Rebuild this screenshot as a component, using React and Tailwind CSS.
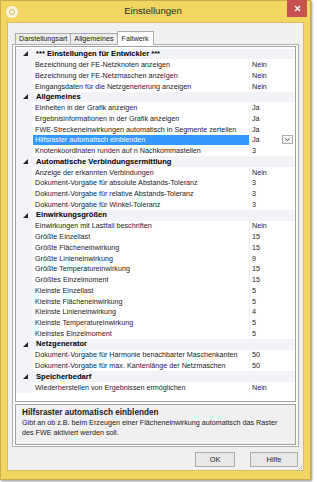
import React from "react";

const rows = [
  { cat: "*** Einstellungen für Entwickler ***" },
  { name: "Bezeichnung der FE-Netzknoten anzeigen", value: "Nein" },
  { name: "Bezeichnung der FE-Netzmaschen anzeigen", value: "Nein" },
  { name: "Eingangsdaten für die Netzgenerierung anzeigen", value: "Nein" },
  { cat: "Allgemeines" },
  { name: "Einheiten in der Grafik anzeigen", value: "Ja" },
  { name: "Ergebnisinformationen in der Grafik anzeigen", value: "Ja" },
  { name: "FWE-Streckeneinwirkungen automatisch in Segmente zerteilen", value: "Ja" },
  { name: "Hilfsraster automatisch einblenden", value: "Ja", selected: true },
  { name: "Knotenkoordinaten runden auf n Nachkommastellen", value: "3" },
  { cat: "Automatische Verbindungsermittlung" },
  { name: "Anzeige der erkannten Verbindungen", value: "Nein" },
  { name: "Dokument-Vorgabe für absolute Abstands-Toleranz", value: "3" },
  { name: "Dokument-Vorgabe für relative Abstands-Toleranz", value: "3" },
  { name: "Dokument-Vorgabe für Winkel-Toleranz", value: "3" },
  { cat: "Einwirkungsgrößen" },
  { name: "Einwirkungen mit Lastfall beschriften", value: "Nein" },
  { name: "Größte Einzellast", value: "15" },
  { name: "Größte Flächeneinwirkung", value: "15" },
  { name: "Größte Linieneinwirkung", value: "9" },
  { name: "Größte Temperatureinwirkung", value: "15" },
  { name: "Größtes Einzelmoment", value: "15" },
  { name: "Kleinste Einzellast", value: "5" },
  { name: "Kleinste Flächeneinwirkung", value: "5" },
  { name: "Kleinste Linieneinwirkung", value: "4" },
  { name: "Kleinste Temperatureinwirkung", value: "5" },
  { name: "Kleinstes Einzelmoment", value: "5" },
  { cat: "Netzgenerator" },
  { name: "Dokument-Vorgabe für Harmonie benachbarter Maschenkanten", value: "50" },
  { name: "Dokument-Vorgabe für max. Kantenlänge der Netzmaschen", value: "50" },
  { cat: "Speicherbedarf" },
  { name: "Wiederherstellen von Ergebnissen ermöglichen", value: "Nein" },
];

const Expander = () => (
  <svg width="5" height="5" viewBox="0 0 5 5" className="block">
    <polygon points="5,0 5,5 0,5" fill="#262626" />
  </svg>
);

const GridRow = ({ row }) => {
  if (row.cat) {
    return (
      <div className="flex h-[10.75px] items-center bg-[#f1f3f6]">
        <div className="w-[16px] flex justify-center pl-[2px]">
          <Expander />
        </div>
        <span className="pl-[4px] font-bold text-[7.6px] leading-none text-black whitespace-nowrap">
          {row.cat}
        </span>
      </div>
    );
  }
  return (
    <div className="flex h-[10.75px] items-stretch">
      <div className="w-[16px] bg-[#f1f3f6]" />
      <div
        className={`ml-[1px] w-[216px] flex items-center pl-[2px] overflow-hidden whitespace-nowrap text-[7.2px] leading-none ${
          row.selected ? "bg-[#3399ff] text-white" : "text-[#1a1a1a]"
        }`}
      >
        {row.name}
      </div>
      <div className="w-[1px] bg-[#f1f3f6]" />
      <div className="flex-1 flex items-center justify-between pl-[2px] pr-[2px] text-[7.2px] leading-none text-[#1a1a1a]">
        <span>{row.value}</span>
        {row.selected && (
          <div className="w-[11px] h-[9px] border border-[#acacac] bg-[#f4f4f4] flex items-center justify-center">
            <svg width="5" height="3" viewBox="0 0 5 3">
              <polyline points="0.5,0.5 2.5,2.5 4.5,0.5" fill="none" stroke="#333" strokeWidth="0.9" />
            </svg>
          </div>
        )}
      </div>
    </div>
  );
};

const Tab = ({ label, active }) => (
  <div
    className={`flex items-center border border-b-0 border-[#acacac] text-[7.2px] leading-none text-[#1a1a1a] ${
      active
        ? "h-[14px] bg-white px-[4px] -mb-[1px] relative z-10"
        : "h-[11px] bg-[#ececec] px-[3px] -mr-[1px]"
    }`}
  >
    {label}
  </div>
);

export default function App() {
  return (
    <div className="w-[317px] h-[482px] bg-white font-['Liberation_Sans',Arial,sans-serif]">
      <div className="w-[311px] h-[480px] bg-[#f3d562] border border-[#c9ad4c] shadow-[1px_1px_2px_rgba(0,0,0,0.45)] flex flex-col">
        {/* Title bar */}
        <div className="h-[21px] flex items-center relative">
          <div className="ml-[5px] w-[12px] h-[12px] rounded-full bg-white/80 flex items-center justify-center">
            <div className="w-[6px] h-[6px] rounded-full border-[1.5px] border-[#c9b25c]" />
          </div>
          <div className="flex-1 text-center text-[9.6px] text-[#2b2b2b] pr-[22px]">Einstellungen</div>
          <div className="absolute right-[3px] top-[-1px] w-[20px] h-[17px] bg-[#c75050] flex items-center justify-center">
            <svg width="7" height="7" viewBox="0 0 7 7">
              <path d="M1 1 L6 6 M6 1 L1 6" stroke="white" strokeWidth="1.4" />
            </svg>
          </div>
        </div>

        {/* Client area */}
        <div className="mx-[6px] h-[449px] bg-[#f0f0f0] border border-[#d9bf63] flex flex-col px-[4px] pt-[6px]">
          {/* Tabs */}
          <div className="flex items-end h-[15px] pl-[3px]">
            <Tab label="Darstellungsart" />
            <Tab label="Allgemeines" />
            <Tab label="Faltwerk" active />
          </div>

          {/* Tab page */}
          <div className="h-[403px] bg-white border border-[#acacac] px-[2px] pt-[1px] flex flex-col">
            <div className="h-[356px] border border-[#a0a0a0] bg-white pt-[1.6px]">
              {rows.map((r, i) => (
                <GridRow key={i} row={r} />
              ))}
            </div>
            <div className="mt-[2px] h-[41px] border border-[#a0a0a0] bg-[#f0f0f0] px-[6px] pt-[3px] text-[#1a1a1a]">
              <div className="font-bold text-[8.2px] leading-[10px]">Hilfsraster automatisch einblenden</div>
              <div className="text-[7.2px] leading-[10px]">
                Gibt an ob z.B. beim Erzeugen einer Flächeneinwirkung automatisch das Raster des FWE aktiviert werden soll.
              </div>
            </div>
          </div>

          {/* Buttons */}
          <div className="flex justify-end gap-[15px] mt-[5px] pr-[1px] relative">
            <button className="w-[40px] h-[15px] border border-[#acacac] bg-[#e8e8e8] text-[7.4px] text-[#1a1a1a]">OK</button>
            <button className="w-[48px] h-[15px] border border-[#acacac] bg-[#e8e8e8] text-[7.4px] text-[#1a1a1a]">Hilfe</button>
            <svg width="5" height="5" viewBox="0 0 5 5" className="absolute right-[-3px] top-[14px]">
              <rect x="4" y="0" width="1" height="1" fill="#a0a0a0" />
              <rect x="2" y="2" width="1" height="1" fill="#a0a0a0" />
              <rect x="4" y="2" width="1" height="1" fill="#a0a0a0" />
              <rect x="0" y="4" width="1" height="1" fill="#a0a0a0" />
              <rect x="2" y="4" width="1" height="1" fill="#a0a0a0" />
              <rect x="4" y="4" width="1" height="1" fill="#a0a0a0" />
            </svg>
          </div>
        </div>
      </div>
    </div>
  );
}
